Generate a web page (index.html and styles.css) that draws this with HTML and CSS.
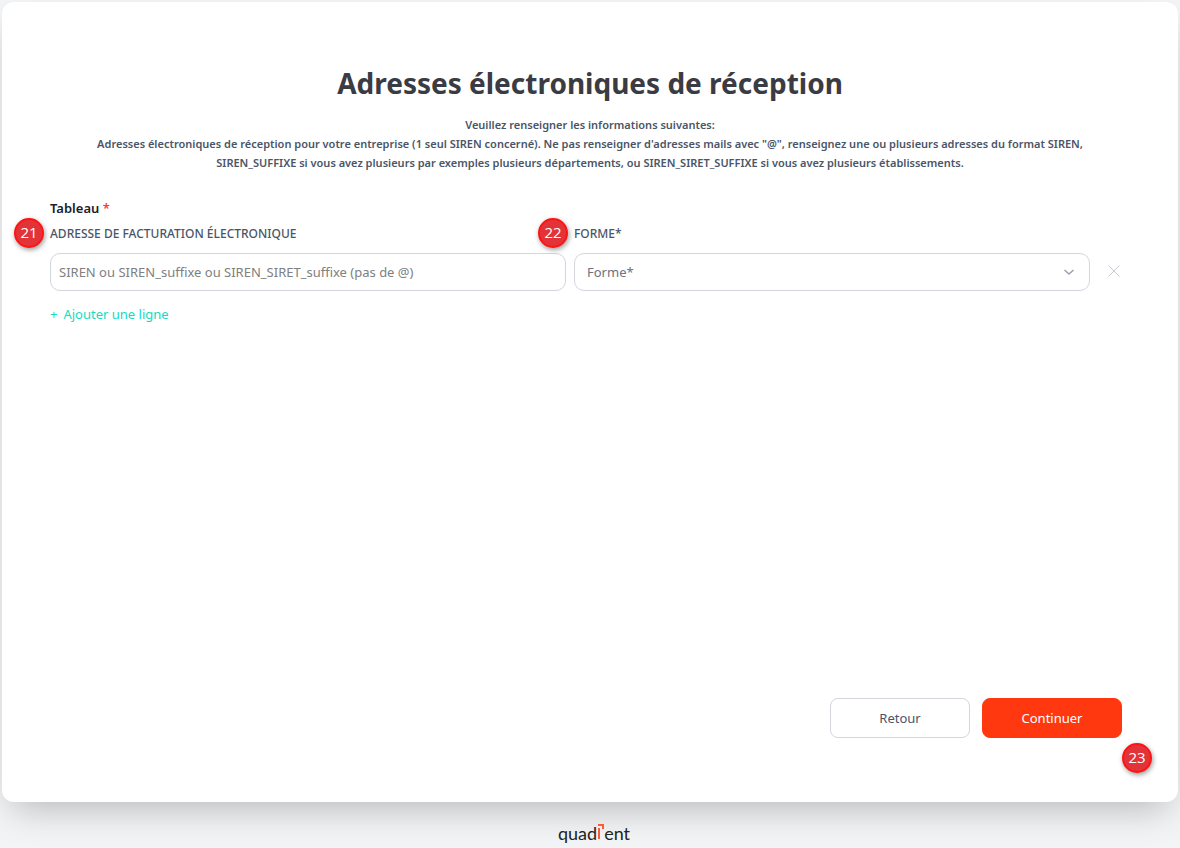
FILE: index.html
```html
<!DOCTYPE html>
<html lang="fr">
<head>
    <meta charset="UTF-8">
    <meta name="viewport" content="width=device-width, initial-scale=1.0">
    <title>Adresses électroniques de réception</title>
    <link rel="stylesheet" href="styles.css">
</head>
<body>

    <main class="card">
        <h1 class="title">Adresses électroniques de réception</h1>
        <div class="intro">
            <p>Veuillez renseigner les informations suivantes:</p>
            <p>Adresses électroniques de réception pour votre entreprise (1 seul SIREN concerné). Ne pas renseigner d'adresses mails avec "@", renseignez une ou plusieurs adresses du format SIREN,<br>
            SIREN_SUFFIXE si vous avez plusieurs par exemples plusieurs départements, ou SIREN_SIRET_SUFFIXE si vous avez plusieurs établissements.</p>
        </div>

        <form class="form">
            <div class="form-label">Tableau <span class="required">*</span></div>

            <!-- Address rows -->
            <div class="rows">
                <div class="field">
                    <label for="adresse">Adresse de facturation électronique</label>
                    <span class="badge badge-left">21</span>
                    <input type="text" id="adresse" class="control" placeholder="SIREN ou SIREN_suffixe ou SIREN_SIRET_suffixe (pas de @)">
                </div>
                <div class="field">
                    <label for="forme">Forme*</label>
                    <span class="badge badge-left">22</span>
                    <select id="forme" class="control">
                        <option>Forme*</option>
                    </select>
                    <svg class="chevron" viewBox="0 0 12 12" aria-hidden="true"><path d="M1.5 4l4.5 4 4.5-4"/></svg>
                </div>
                <button type="button" class="remove" aria-label="Supprimer la ligne">
                    <svg viewBox="0 0 12 12" aria-hidden="true"><path d="M0.5 0.5l11 11M11.5 0.5l-11 11"/></svg>
                </button>
            </div>

            <button type="button" class="add-row"><span>+</span> <span>Ajouter une ligne</span></button>

            <div class="actions">
                <button type="button" class="btn">Retour</button>
                <button type="submit" class="btn btn-primary">Continuer</button>
                <span class="badge badge-corner">23</span>
            </div>
        </form>
    </main>

    <footer class="footer">
        <div class="logo">
            <span>quad</span>
            <svg viewBox="0 0 7 15" aria-hidden="true"><path class="logo-corner" d="M1 1h5v4"/><path class="logo-stem" d="M2 4v11"/></svg>
            <span>ent</span>
        </div>
    </footer>

</body>
</html>
```

FILE: styles.css
```css
* {
    box-sizing: border-box;
}

body {
    font-family: 'Noto Sans', 'Segoe UI', sans-serif;
    font-size: 13px;
    background-color: #f2f4f6;
    color: #4a5568;
    margin: 0;
    min-height: 100vh;
    display: flex;
    flex-direction: column;
}

button,
input,
select {
    font: inherit;
    color: inherit;
}

.card {
    flex: 1;
    display: flex;
    flex-direction: column;
    margin: 2px 2px 0;
    padding: 60px 48px 64px;
    background-color: #fff;
    border-radius: 12px;
    box-shadow: 0 16px 36px -10px rgba(0, 0, 0, 0.25);
}

.title {
    margin: 0 0 10px;
    font-size: 28px;
    line-height: 43px;
    font-weight: 700;
    text-align: center;
    color: #3b3b43;
}

.intro {
    font-size: 11px;
    line-height: 19px;
    font-weight: 600;
    text-align: center;
}

.intro p {
    margin: 0;
}

.form {
    flex: 1;
    display: flex;
    flex-direction: column;
    margin-top: 25px;
}

.form-label {
    line-height: 22px;
    font-weight: 600;
    color: #1a202c;
}

.required {
    color: #ff3b3b;
}

/* Address rows */
.rows {
    display: grid;
    grid-template-columns: 1fr 1fr 32px;
    gap: 8px;
    align-items: end;
}

.field {
    position: relative;
}

.field label {
    display: block;
    margin-bottom: 4px;
    font-size: 12px;
    line-height: 30px;
    font-weight: 500;
    text-transform: uppercase;
}

.control {
    display: block;
    width: 100%;
    height: 38px;
    padding: 0 8px;
    background-color: #fff;
    border: 1px solid #d2d6dc;
    border-radius: 10px;
    outline: none;
}

.control::placeholder {
    color: #808080;
    opacity: 1;
}

select.control {
    padding: 0 12px;
    appearance: none;
    color: #6b7280;
}

.chevron {
    position: absolute;
    right: 15px;
    bottom: 13px;
    width: 12px;
    height: 12px;
    fill: none;
    stroke: #9aa0ae;
    stroke-width: 1.5;
    pointer-events: none;
}

.remove {
    height: 38px;
    padding: 0;
    background: none;
    border: none;
    cursor: pointer;
}

.remove svg {
    width: 12px;
    height: 12px;
    fill: none;
    stroke: #c3cbd7;
}

.add-row {
    display: flex;
    gap: 6px;
    align-self: flex-start;
    margin-top: 12px;
    padding: 0;
    line-height: 22px;
    background: none;
    border: none;
    color: #12dcc4;
    cursor: pointer;
}

/* Numbered markers */
.badge {
    position: absolute;
    width: 30px;
    height: 30px;
    border: 2px solid #ff1414;
    border-radius: 50%;
    background-color: #e23338;
    box-shadow: 1px 2px 5px rgba(0, 0, 0, 0.4);
    font-family: 'Open Sans', sans-serif;
    font-size: 15px;
    line-height: 25px;
    text-align: center;
    color: #fff;
}

.badge-left {
    top: -1px;
    left: -36px;
}

.badge-corner {
    right: -30px;
    bottom: -35px;
}

.actions {
    position: relative;
    display: flex;
    justify-content: flex-end;
    gap: 12px;
    margin-top: auto;
    margin-right: 8px;
}

.btn {
    width: 140px;
    height: 40px;
    background-color: #fff;
    border: 1px solid #d2d6dc;
    border-radius: 8px;
    cursor: pointer;
}

.btn-primary {
    background-color: #ff380f;
    border-color: #ff380f;
    color: #fff;
}

.footer {
    display: flex;
    justify-content: center;
    height: 46px;
    padding: 19px 0 0 8px;
}

.logo {
    display: flex;
    font-family: Lato, sans-serif;
    font-size: 18px;
    line-height: 24px;
    color: #222;
}

.logo svg {
    width: 7px;
    height: 15px;
    margin-top: 3px;
    fill: none;
    stroke: #ff5a36;
}

.logo-corner {
    stroke-width: 2;
}

.logo-stem {
    stroke-width: 2;
}
```
